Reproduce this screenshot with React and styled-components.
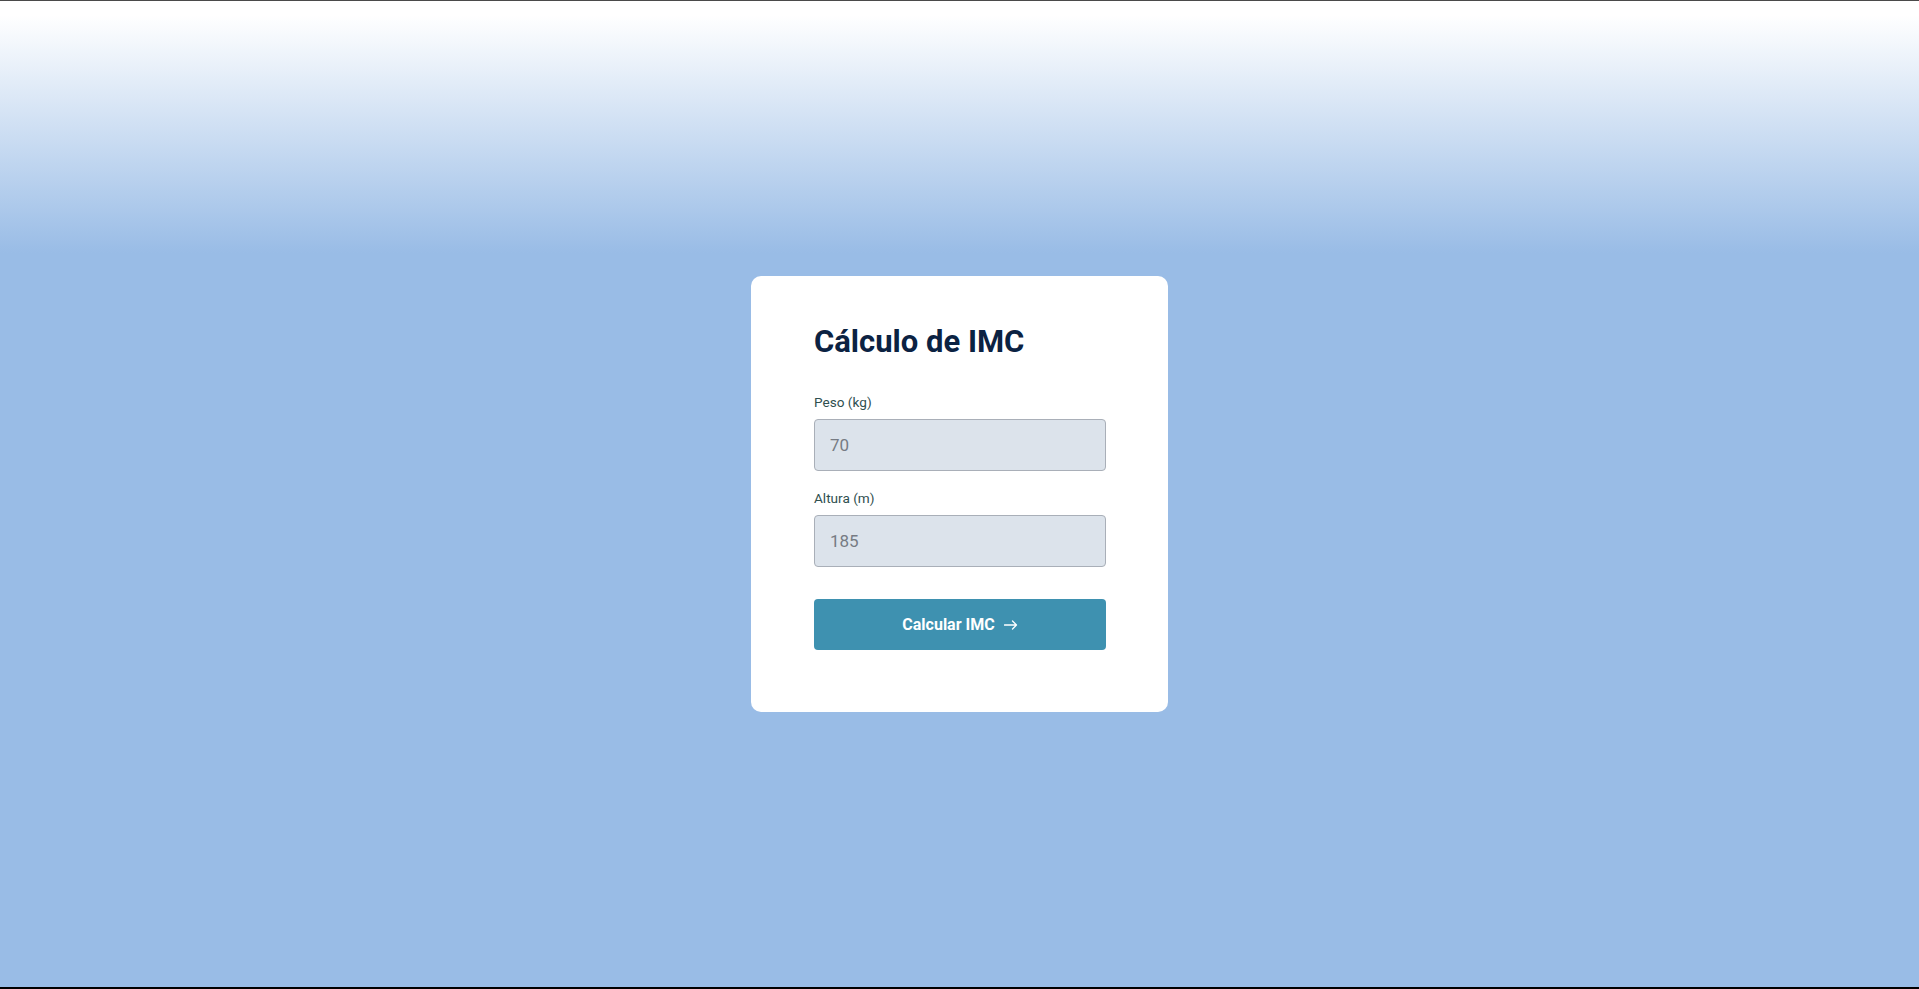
import React from "react";
import styled, { createGlobalStyle } from "styled-components";

const GlobalStyle = createGlobalStyle`
  html, body {
    margin: 0;
    padding: 0;
  }

  body {
    font-family: Roboto, "Liberation Sans", Arial, sans-serif;
  }

  * {
    box-sizing: border-box;
  }
`;

const Page = styled.div`
  display: flex;
  justify-content: center;
  align-items: center;
  min-height: 100vh;
  border-top: 1px solid #4a4a4a;
  border-bottom: 2px solid #000;
  background: linear-gradient(to bottom, #ffffff 14px, #99bce6 252px);
  background-color: #99bce6;
`;

const Card = styled.form`
  width: 417px;
  padding: 47px 62px 62px 63px;
  background-color: #fff;
  border-radius: 10px;
`;

const Title = styled.h1`
  margin: 0 0 33px;
  font-size: 31px;
  line-height: 38px;
  font-weight: 700;
  color: #0b2242;
`;

const Field = styled.div`
  display: flex;
  flex-direction: column;
  gap: 9px;
  margin-bottom: ${(props) => (props.last ? "32px" : "19px")};
`;

const Label = styled.label`
  font-size: 13.6px;
  line-height: 16px;
  color: #2f4f4f;
`;

const Input = styled.input`
  width: 100%;
  height: 52px;
  padding: 0 15px;
  border: 1px solid #a9afb8;
  border-radius: 4px;
  background-color: #dce3eb;
  font-family: inherit;
  font-size: 17px;
  color: #333;
  outline: none;

  &::placeholder {
    color: #767b83;
  }
`;

const Button = styled.button`
  display: flex;
  justify-content: center;
  align-items: center;
  gap: 9px;
  width: 100%;
  height: 51px;
  border: none;
  border-radius: 4px;
  background-color: #3e91b0;
  color: #fff;
  font-family: inherit;
  font-size: 16px;
  font-weight: 700;
  cursor: pointer;
`;

const Arrow = () => (
  <svg width="14" height="10" viewBox="0 0 14 10" fill="none">
    <path
      d="M0.5 5h12M8.5 1l4 4-4 4"
      stroke="#fff"
      strokeWidth="1.3"
      strokeLinecap="round"
      strokeLinejoin="round"
    />
  </svg>
);

export default function App() {
  return (
    <>
      <GlobalStyle />
      <Page>
        <Card onSubmit={(e) => e.preventDefault()}>
          <Title>Cálculo de IMC</Title>
          <Field>
            <Label htmlFor="peso">Peso (kg)</Label>
            <Input id="peso" type="text" placeholder="70" />
          </Field>
          <Field last>
            <Label htmlFor="altura">Altura (m)</Label>
            <Input id="altura" type="text" placeholder="185" />
          </Field>
          <Button type="submit">
            Calcular IMC
            <Arrow />
          </Button>
        </Card>
      </Page>
    </>
  );
}
